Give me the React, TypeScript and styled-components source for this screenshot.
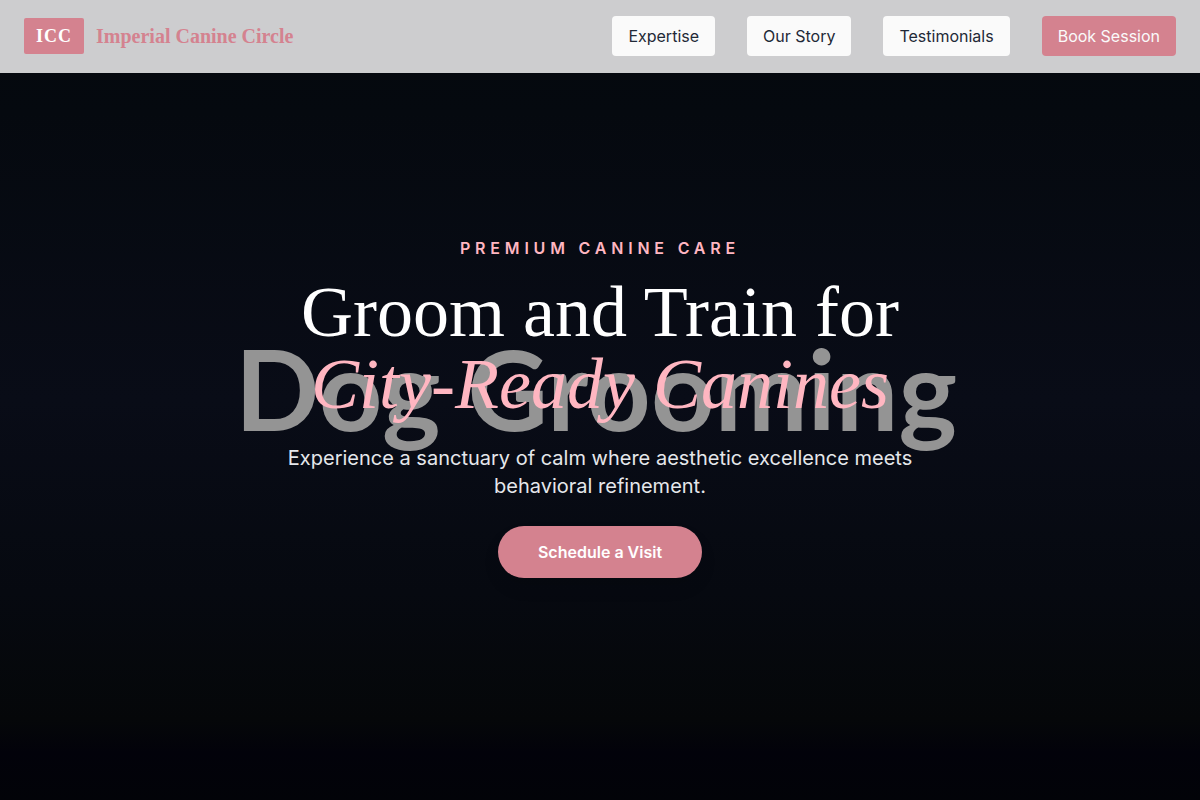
import React from "react";
import styled, { createGlobalStyle, css } from "styled-components";

const sans = '"Inter", "Liberation Sans", sans-serif';
const serif = '"Liberation Serif", serif';
const rose = "#d4828f";
const blush = "#ffb6c1";

const GlobalStyle = createGlobalStyle`
  *, *::before, *::after { box-sizing: border-box; }
  body {
    margin: 0;
    background: #02020a;
    color: #ffffff;
    font-family: ${sans};
    font-size: 16px;
    line-height: 24px;
  }
  h1, p { margin: 0; font-weight: 400; }
`;

const Header = styled.header`
  position: fixed;
  inset: 0 0 auto;
  z-index: 10;
  display: flex;
  align-items: center;
  justify-content: space-between;
  gap: 24px;
  padding: 16px 24px;
  border-bottom: 1px solid #cdcdcf;
  background: #cdcdcf;
`;

const Brand = styled.a`
  display: flex;
  align-items: center;
  gap: 12px;
  color: ${rose};
  font-family: ${serif};
  font-size: 20px;
  font-weight: 700;
  line-height: 28px;
  text-decoration: none;
`;

const Monogram = styled.span`
  padding: 4px 12px;
  border-radius: 2px;
  background: ${rose};
  color: #ffffff;
  font-size: 18px;
  letter-spacing: 1px;
`;

const Nav = styled.nav`
  display: flex;
  gap: 32px;
`;

const NavLink = styled.a<{ $primary?: boolean }>`
  padding: 8px 16px;
  border-radius: 4px;
  background: #fafafa;
  color: #1f2937;
  text-decoration: none;
  white-space: nowrap;
  ${({ $primary }) =>
    $primary &&
    css`
      background: ${rose};
      color: #fafafa;
    `}
`;

const Hero = styled.section`
  display: grid;
  place-items: center;
  min-height: 100vh;
  background: linear-gradient(#05080d 0%, #05090f 14%, #090c17 50%, #060910 74%, #050709 90%, #02020a 94%, #020308 100%);
`;

const Backdrop = styled.div`
  grid-area: 1 / 1;
  padding: 0 8px 24px 0;
  color: #949494;
  font-family: "Lato", sans-serif;
  font-size: 111px;
  font-weight: 700;
  line-height: 136px;
  white-space: nowrap;
`;

const Content = styled.div`
  grid-area: 1 / 1;
  z-index: 1;
  display: flex;
  flex-direction: column;
  align-items: center;
  max-width: 672px;
  padding-top: 14px;
  text-align: center;
`;

const Eyebrow = styled.p`
  margin-bottom: 16px;
  color: ${blush};
  font-weight: 600;
  letter-spacing: 0.3em;
  text-transform: uppercase;
`;

const Title = styled.h1`
  margin-bottom: 24px;
  font-family: ${serif};
  font-size: 72px;
  line-height: 72px;
`;

const Accent = styled.em`
  display: block;
  color: ${blush};
`;

const Lead = styled.p`
  margin-bottom: 26px;
  color: #e5e7eb;
  font-size: 20px;
  line-height: 28px;
`;

const Cta = styled.button`
  padding: 14px 40px;
  border: 0;
  border-radius: 26px;
  background: ${rose};
  color: #ffffff;
  font: 600 16px/24px ${sans};
  box-shadow: 0 10px 16px rgba(0, 0, 0, 0.1);
  cursor: pointer;
`;

export default function App() {
  return (
    <>
      <GlobalStyle />
      <Header>
        <Brand href="#top">
          <Monogram>ICC</Monogram>
          <span>Imperial Canine Circle</span>
        </Brand>
        <Nav aria-label="Main">
          <NavLink href="#expertise">Expertise</NavLink>
          <NavLink href="#story">Our Story</NavLink>
          <NavLink href="#testimonials">Testimonials</NavLink>
          <NavLink href="#book" $primary>Book Session</NavLink>
        </Nav>
      </Header>
      <main>
        <Hero id="top">
          <Backdrop>Dog Grooming</Backdrop>
          <Content>
            <Eyebrow>Premium Canine Care</Eyebrow>
            <Title>
              Groom and Train for <Accent>City-Ready Canines</Accent>
            </Title>
            <Lead>
              Experience a sanctuary of calm where aesthetic excellence meets behavioral refinement.
            </Lead>
            <Cta type="button">Schedule a Visit</Cta>
          </Content>
        </Hero>
      </main>
    </>
  );
}
